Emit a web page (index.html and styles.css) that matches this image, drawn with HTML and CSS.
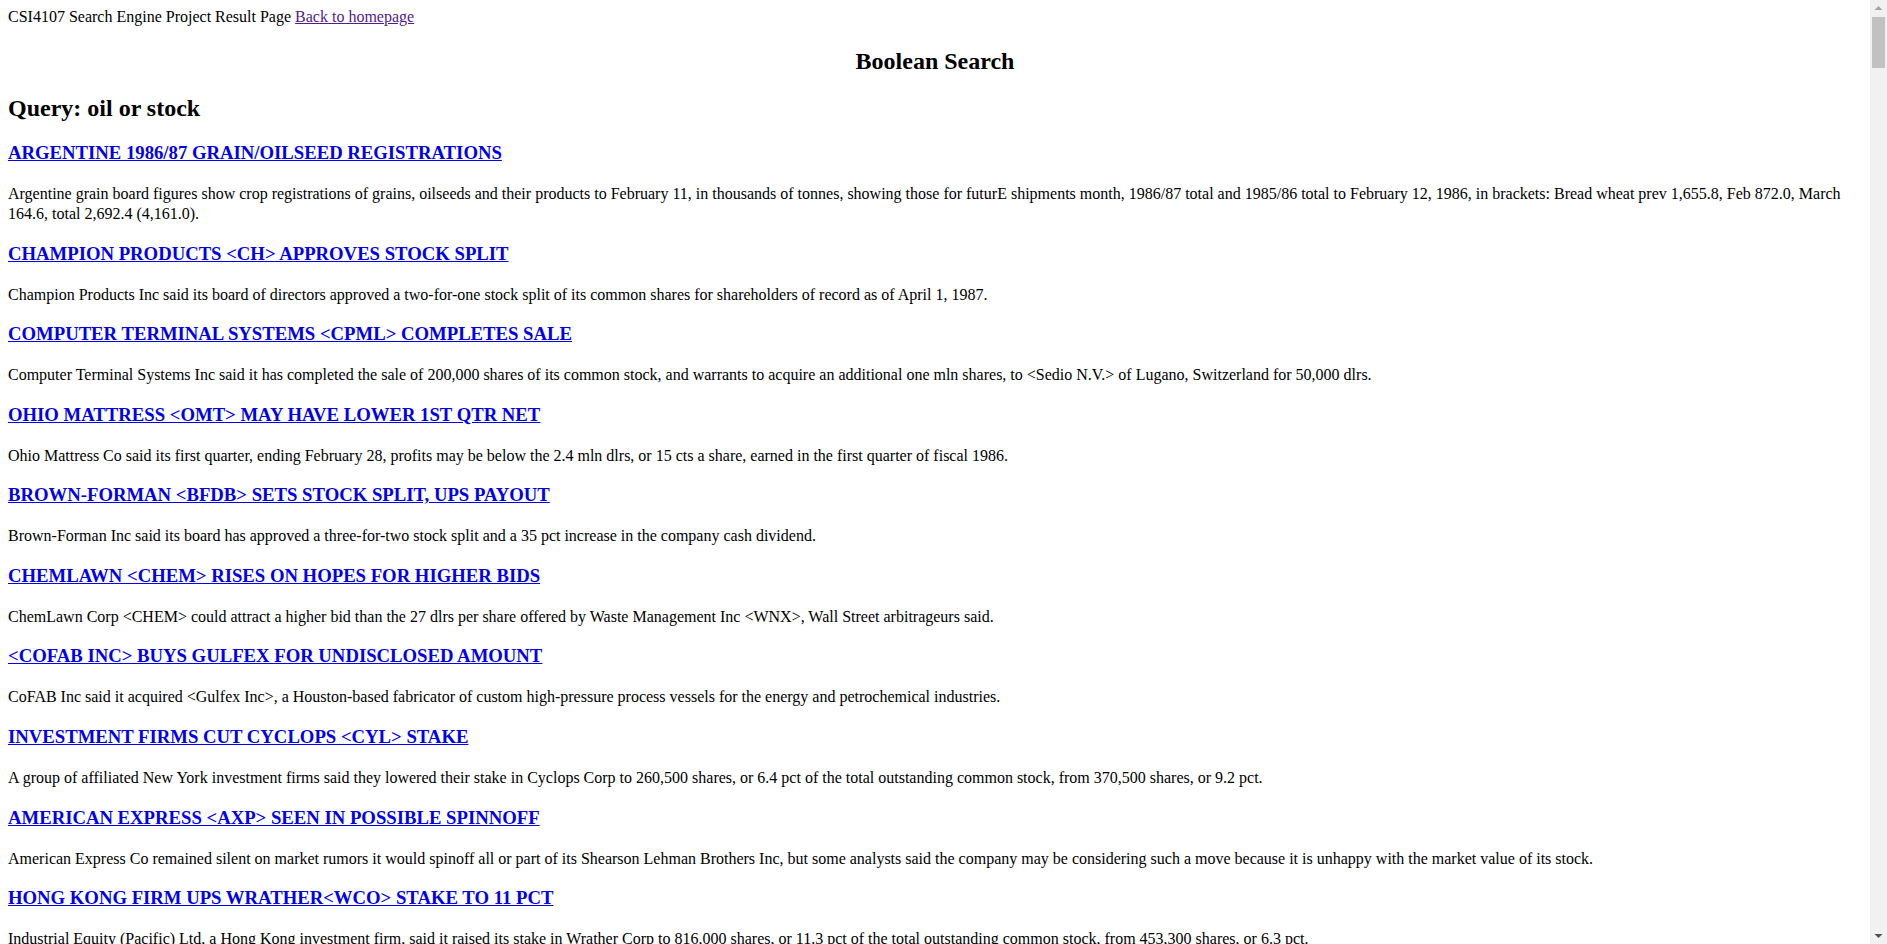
FILE: index.html
```html
<!DOCTYPE html>
<html>
<head>
<meta charset="utf-8">
<title>Boolean Search</title>
<link rel="stylesheet" href="styles.css">
</head>
<body>
<div class="topbar">CSI4107 Search Engine Project Result Page <a class="home" href="#">Back to homepage</a></div>
<h2 class="title">Boolean Search</h2>
<h2 class="query">Query: oil or stock</h2>
<div class="results">
<h3 class="doc"><a href="#">ARGENTINE 1986/87 GRAIN/OILSEED REGISTRATIONS</a></h3>
<p class="summary">Argentine grain board figures show crop registrations of grains, oilseeds and their products to February 11, in thousands of tonnes, showing those for futurE shipments month, 1986/87 total and 1985/86 total to February 12, 1986, in brackets: Bread wheat prev 1,655.8, Feb 872.0, March 164.6, total 2,692.4 (4,161.0).</p>
<h3 class="doc"><a href="#">CHAMPION PRODUCTS &lt;CH&gt; APPROVES STOCK SPLIT</a></h3>
<p class="summary">Champion Products Inc said its board of directors approved a two-for-one stock split of its common shares for shareholders of record as of April 1, 1987.</p>
<h3 class="doc"><a href="#">COMPUTER TERMINAL SYSTEMS &lt;CPML&gt; COMPLETES SALE</a></h3>
<p class="summary">Computer Terminal Systems Inc said it has completed the sale of 200,000 shares of its common stock, and warrants to acquire an additional one mln shares, to &lt;Sedio N.V.&gt; of Lugano, Switzerland for 50,000 dlrs.</p>
<h3 class="doc"><a href="#">OHIO MATTRESS &lt;OMT&gt; MAY HAVE LOWER 1ST QTR NET</a></h3>
<p class="summary">Ohio Mattress Co said its first quarter, ending February 28, profits may be below the 2.4 mln dlrs, or 15 cts a share, earned in the first quarter of fiscal 1986.</p>
<h3 class="doc"><a href="#">BROWN-FORMAN &lt;BFDB&gt; SETS STOCK SPLIT, UPS PAYOUT</a></h3>
<p class="summary">Brown-Forman Inc said its board has approved a three-for-two stock split and a 35 pct increase in the company cash dividend.</p>
<h3 class="doc"><a href="#">CHEMLAWN &lt;CHEM&gt; RISES ON HOPES FOR HIGHER BIDS</a></h3>
<p class="summary">ChemLawn Corp &lt;CHEM&gt; could attract a higher bid than the 27 dlrs per share offered by Waste Management Inc &lt;WNX&gt;, Wall Street arbitrageurs said.</p>
<h3 class="doc"><a href="#">&lt;COFAB INC&gt; BUYS GULFEX FOR UNDISCLOSED AMOUNT</a></h3>
<p class="summary">CoFAB Inc said it acquired &lt;Gulfex Inc&gt;, a Houston-based fabricator of custom high-pressure process vessels for the energy and petrochemical industries.</p>
<h3 class="doc"><a href="#">INVESTMENT FIRMS CUT CYCLOPS &lt;CYL&gt; STAKE</a></h3>
<p class="summary">A group of affiliated New York investment firms said they lowered their stake in Cyclops Corp to 260,500 shares, or 6.4 pct of the total outstanding common stock, from 370,500 shares, or 9.2 pct.</p>
<h3 class="doc"><a href="#">AMERICAN EXPRESS &lt;AXP&gt; SEEN IN POSSIBLE SPINNOFF</a></h3>
<p class="summary">American Express Co remained silent on market rumors it would spinoff all or part of its Shearson Lehman Brothers Inc, but some analysts said the company may be considering such a move because it is unhappy with the market value of its stock.</p>
<h3 class="doc"><a href="#">HONG KONG FIRM UPS WRATHER&lt;WCO&gt; STAKE TO 11 PCT</a></h3>
<p class="summary">Industrial Equity (Pacific) Ltd, a Hong Kong investment firm, said it raised its stake in Wrather Corp to 816,000 shares, or 11.3 pct of the total outstanding common stock, from 453,300 shares, or 6.3 pct.</p>
</div>
<div class="scrollbar" aria-hidden="true">
  <svg class="sb-up" width="17" height="17" viewBox="0 0 17 17"><polygon points="4.5,10 8.5,6 12.5,10" fill="#a3a3a3"/></svg>
  <div class="sb-thumb"></div>
  <svg class="sb-down" width="17" height="17" viewBox="0 0 17 17"><polygon points="4.5,7 12.5,7 8.5,11" fill="#505050"/></svg>
</div>
</body>
</html>
```
FILE: styles.css
```css
html {
  overflow-y: scroll;
}
body {
  margin: 8px 25px 8px 8px;
  font-family: "Liberation Serif", "Times New Roman", serif;
  font-size: 16px;
  color: #000;
  background: #fff;
}
.topbar {
  line-height: normal;
}
.home {
  color: #551a8b;
  text-decoration: underline;
}
.title {
  text-align: center;
  font-size: 24px;
  font-weight: bold;
  margin: 22px 0 19.92px;
}
.query {
  font-size: 24px;
  font-weight: bold;
  margin: 19.92px 0 20px;
}
.doc {
  font-size: 18.72px;
  font-weight: bold;
  margin: 18.6px 0 20px;
}
.doc a {
  color: #0000ee;
  text-decoration: underline;
}
.summary {
  margin: 0;
  line-height: 20px;
}
.scrollbar {
  position: fixed;
  top: 0;
  right: 0;
  width: 17px;
  height: 100vh;
  background: #f1f1f1;
  display: flex;
  flex-direction: column;
}
.sb-up, .sb-down {
  display: block;
  flex: none;
}
.sb-thumb {
  margin: 0 2px;
  height: 51px;
  background: #c1c1c1;
}
.sb-down {
  margin-top: auto;
}
```
